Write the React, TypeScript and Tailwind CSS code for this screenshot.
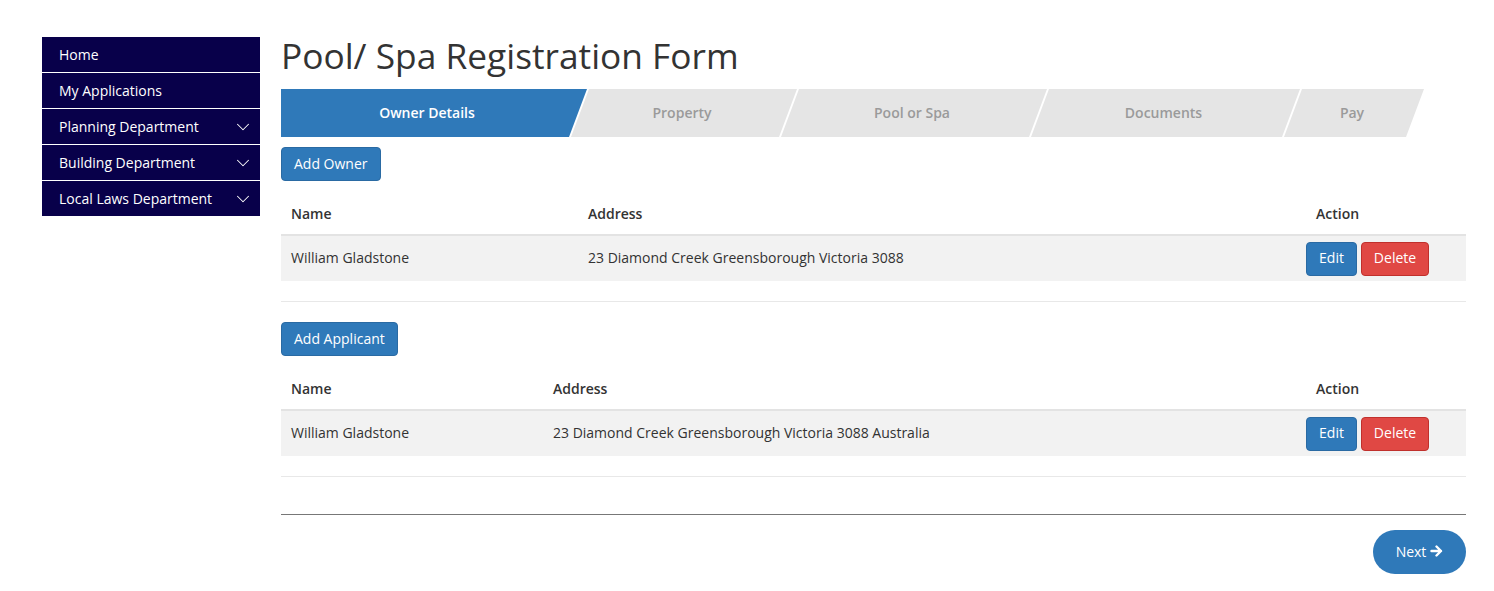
import { ChevronDown } from "lucide-react";

const menu = [
  { label: "Home", sub: false },
  { label: "My Applications", sub: false },
  { label: "Planning Department", sub: true },
  { label: "Building Department", sub: true },
  { label: "Local Laws Department", sub: true },
];

const steps = [
  { label: "Owner Details", w: "w-[306px]", clip: "[clip-path:polygon(0_0,100%_0,calc(100%-18px)_100%,0_100%)]", first: true },
  { label: "Property", w: "w-[226px]", clip: "[clip-path:polygon(18px_0,100%_0,calc(100%-18px)_100%,0_100%)]" },
  { label: "Pool or Spa", w: "w-[266px]", clip: "[clip-path:polygon(18px_0,100%_0,calc(100%-18px)_100%,0_100%)]" },
  { label: "Documents", w: "w-[269px]", clip: "[clip-path:polygon(18px_0,100%_0,calc(100%-18px)_100%,0_100%)]" },
  { label: "Pay", w: "w-[140px]", clip: "[clip-path:polygon(18px_0,100%_0,calc(100%-18px)_100%,0_100%)]" },
];

function BlueButton({ children }: { children: React.ReactNode }) {
  return (
    <button className="h-[34px] px-3 pb-[2px] rounded-[4px] bg-[#2f79b9] border border-[#2a6aa3] text-white text-[14px]">
      {children}
    </button>
  );
}

function PeopleTable({ nameW, address }: { nameW: string; address: string }) {
  return (
    <table className="w-full border-collapse text-[14px] text-[#333]">
      <thead>
        <tr className="border-b-2 border-[#e3e3e3]">
          <th className={`${nameW} text-left font-semibold px-[10px] pt-[8px] pb-[10px] leading-5`}>Name</th>
          <th className="text-left font-semibold px-[10px] pt-[8px] pb-[10px] leading-5">Address</th>
          <th className="w-[160px] text-left font-semibold px-[10px] pt-[8px] pb-[10px] leading-5">Action</th>
        </tr>
      </thead>
      <tbody>
        <tr className="bg-[#f2f2f2]">
          <td className="px-[10px] pb-[2px] h-[46px] align-middle">William Gladstone</td>
          <td className="px-[10px] pb-[2px] align-middle">{address}</td>
          <td className="align-middle">
            <div className="flex gap-1">
              <button className="h-[34px] w-[51px] pb-[2px] rounded-[4px] bg-[#2f79b9] border border-[#2a6aa3] text-white text-[14px]">Edit</button>
              <button className="h-[34px] w-[68px] pb-[2px] rounded-[4px] bg-[#e04844] border border-[#c0302c] text-white text-[14px]">Delete</button>
            </div>
          </td>
        </tr>
      </tbody>
    </table>
  );
}

export default function App() {
  return (
    <div className="min-h-screen bg-white flex gap-[21px] pl-[42px] pt-[37px] pr-[28px] font-['Open_Sans',sans-serif]">
      <nav className="w-[218px] shrink-0">
        {menu.map((m, i) => (
          <div
            key={i}
            className={`bg-[#08004a] text-white text-[14px] flex items-center justify-between pl-[17px] pr-[6px] ${i < menu.length - 1 ? "h-[36px] border-b border-white" : "h-[35px]"}`}
          >
            <span>{m.label}</span>
            {m.sub && <ChevronDown size={22} strokeWidth={1.1} />}
          </div>
        ))}
      </nav>

      <main className="flex-1 min-w-0">
        <h1 className="text-[35.3px] leading-[36px] text-[#333] mb-[16px]">Pool/ Spa Registration Form</h1>

        <div className="flex h-[48px]">
          {steps.map((s, i) => (
            <div
              key={i}
              className={`${s.w} ${s.clip} ${i > 0 ? "-ml-[16px]" : ""} ${s.first ? "bg-[#2f79b9] text-white pr-[14px]" : "bg-[#e5e5e5] text-[#9a9a9a] pr-[4px]"} h-full flex items-center justify-center pb-[2px] text-[14px] font-semibold shrink-0`}
            >
              {s.label}
            </div>
          ))}
        </div>

        <div className="mt-[10px]">
          <BlueButton>Add Owner</BlueButton>
        </div>
        <div className="mt-[15px]">
          <PeopleTable nameW="w-[297px]" address="23 Diamond Creek Greensborough Victoria 3088" />
        </div>
        <div className="mt-[20px] border-t border-[#e8e8e8]" />

        <div className="mt-[20px]">
          <BlueButton>Add Applicant</BlueButton>
        </div>
        <div className="mt-[15px]">
          <PeopleTable nameW="w-[262px]" address="23 Diamond Creek Greensborough Victoria 3088 Australia" />
        </div>
        <div className="mt-[20px] border-t border-[#e8e8e8]" />

        <div className="mt-[37px] border-t border-[#777]" />
        <div className="flex justify-end mt-[15px]">
          <button className="h-[44px] w-[93px] pb-[2px] rounded-full bg-[#2f79b9] text-white text-[14px] flex items-center justify-center gap-1">
            Next
            <svg width="13" height="12" viewBox="0 0 13 12" fill="none" stroke="currentColor" strokeWidth="2.4" strokeLinecap="round" strokeLinejoin="round">
              <path d="M1.5 6h9.5M6.5 1.5 11 6l-4.5 4.5" />
            </svg>
          </button>
        </div>
      </main>
    </div>
  );
}
